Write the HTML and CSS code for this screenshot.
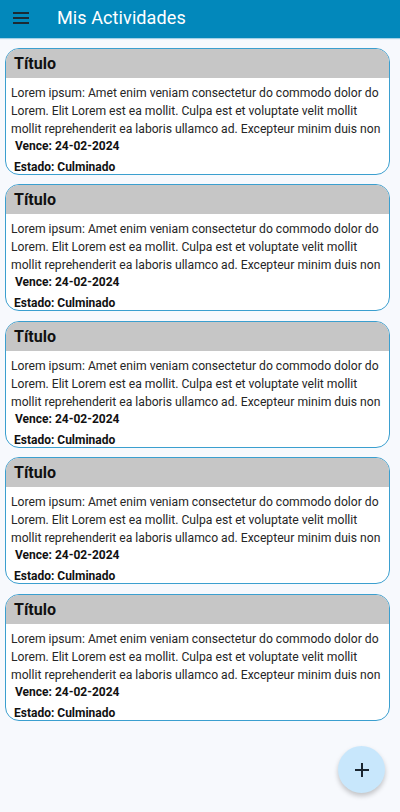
FILE: index.html
```html
<!DOCTYPE html>
<html lang="es">
<head>
<meta charset="utf-8">
<title>Mis Actividades</title>
<link rel="stylesheet" href="styles.css">
</head>
<body>
<header class="appbar">
  <button class="menu-btn" aria-label="Menú">
    <svg width="16" height="12" viewBox="0 0 16 12"><rect x="0" y="0" width="16" height="2" fill="#1c2a33"/><rect x="0" y="5" width="16" height="2" fill="#1c2a33"/><rect x="0" y="10" width="16" height="2" fill="#1c2a33"/></svg>
  </button>
  <h1 class="appbar-title">Mis Actividades</h1>
</header>
<main class="list">
  <article class="card">
    <div class="card-head">Título</div>
    <div class="card-body">
      <p class="desc"><span class="ln">Lorem ipsum: Amet enim veniam consectetur do commodo dolor do</span> <span class="ln">Lorem. Elit Lorem est ea mollit. Culpa est et voluptate velit mollit</span> <span class="ln">mollit reprehenderit ea laboris ullamco ad. Excepteur minim duis non</span></p>
      <p class="due">Vence: 24-02-2024</p>
      <p class="state">Estado: Culminado</p>
    </div>
  </article>
  <article class="card">
    <div class="card-head">Título</div>
    <div class="card-body">
      <p class="desc"><span class="ln">Lorem ipsum: Amet enim veniam consectetur do commodo dolor do</span> <span class="ln">Lorem. Elit Lorem est ea mollit. Culpa est et voluptate velit mollit</span> <span class="ln">mollit reprehenderit ea laboris ullamco ad. Excepteur minim duis non</span></p>
      <p class="due">Vence: 24-02-2024</p>
      <p class="state">Estado: Culminado</p>
    </div>
  </article>
  <article class="card">
    <div class="card-head">Título</div>
    <div class="card-body">
      <p class="desc"><span class="ln">Lorem ipsum: Amet enim veniam consectetur do commodo dolor do</span> <span class="ln">Lorem. Elit Lorem est ea mollit. Culpa est et voluptate velit mollit</span> <span class="ln">mollit reprehenderit ea laboris ullamco ad. Excepteur minim duis non</span></p>
      <p class="due">Vence: 24-02-2024</p>
      <p class="state">Estado: Culminado</p>
    </div>
  </article>
  <article class="card">
    <div class="card-head">Título</div>
    <div class="card-body">
      <p class="desc"><span class="ln">Lorem ipsum: Amet enim veniam consectetur do commodo dolor do</span> <span class="ln">Lorem. Elit Lorem est ea mollit. Culpa est et voluptate velit mollit</span> <span class="ln">mollit reprehenderit ea laboris ullamco ad. Excepteur minim duis non</span></p>
      <p class="due">Vence: 24-02-2024</p>
      <p class="state">Estado: Culminado</p>
    </div>
  </article>
  <article class="card">
    <div class="card-head">Título</div>
    <div class="card-body">
      <p class="desc"><span class="ln">Lorem ipsum: Amet enim veniam consectetur do commodo dolor do</span> <span class="ln">Lorem. Elit Lorem est ea mollit. Culpa est et voluptate velit mollit</span> <span class="ln">mollit reprehenderit ea laboris ullamco ad. Excepteur minim duis non</span></p>
      <p class="due">Vence: 24-02-2024</p>
      <p class="state">Estado: Culminado</p>
    </div>
  </article>
</main>
<button class="fab" aria-label="Agregar">
  <svg width="14" height="14" viewBox="0 0 14 14"><rect x="6" y="0" width="2" height="14" fill="#1a2630"/><rect x="0" y="6" width="14" height="2" fill="#1a2630"/></svg>
</button>
</body>
</html>
```
FILE: styles.css
```css
* { box-sizing: border-box; }
html, body { margin: 0; padding: 0; }
body {
  width: 400px;
  height: 812px;
  overflow: hidden;
  background: #f7f9fd;
  font-family: Roboto, "Liberation Sans", sans-serif;
  color: #1d1d1d;
}
.appbar {
  height: 38px;
  background: #0288bb;
  display: flex;
  align-items: center;
  padding-left: 13px;
  box-shadow: 0 1px 1px rgba(2, 136, 187, 0.35);
}
.menu-btn {
  background: none;
  border: 0;
  padding: 0;
  width: 16px;
  height: 12px;
  display: flex;
  margin-top: -2px;
}
.appbar-title {
  margin: 0 0 0 28px;
  font-size: 18px;
  font-weight: 400;
  color: #ffffff;
  letter-spacing: 0.1px;
  margin-top: -3px;
}
.list {
  display: flex;
  flex-direction: column;
  gap: 9.4px;
  padding: 10px 10px 0 5px;
}
.card {
  height: 127px;
  border: 1px solid #3b9fcf;
  border-radius: 14px;
  background: #ffffff;
  overflow: hidden;
  display: flex;
  flex-direction: column;
}
.card-head {
  height: 29px;
  background: #c6c6c6;
  font-size: 16px;
  font-weight: 700;
  color: #111;
  padding-left: 8px;
  display: flex;
  align-items: center;
  flex-shrink: 0;
}
.card-body {
  padding: 6px 6px 0 5px;
}
.desc {
  margin: 0;
  font-size: 12.15px;
  line-height: 18px;
  color: #262626;
}
.ln {
  display: block;
  white-space: nowrap;
}
.due {
  margin: -1px 0 0 0;
  padding-left: 4px;
  font-size: 12px;
  font-weight: 700;
  line-height: 18px;
  color: #111;
}
.state {
  margin: 3px 0 0 0;
  padding-left: 3px;
  font-size: 12px;
  font-weight: 700;
  line-height: 18px;
  color: #111;
}
.fab {
  position: fixed;
  left: 338px;
  top: 746px;
  width: 47px;
  height: 47px;
  border-radius: 50%;
  border: 0;
  background: #c8e7fc;
  box-shadow: 0 3px 5px rgba(0, 0, 0, 0.22);
  display: flex;
  align-items: center;
  justify-content: center;
  padding: 0;
}
```
